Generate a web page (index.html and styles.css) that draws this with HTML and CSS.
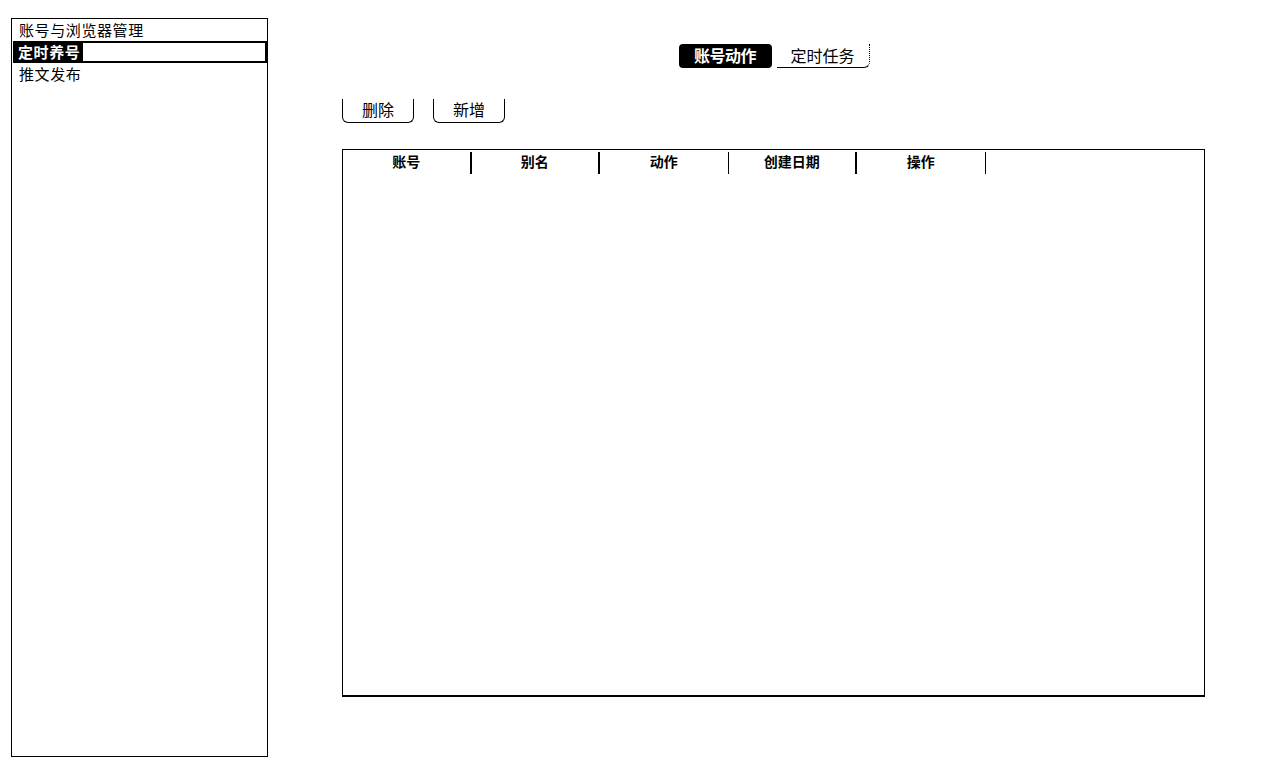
FILE: index.html
```html
<!DOCTYPE html>
<html lang="zh">
<head>
<meta charset="utf-8">
<link rel="stylesheet" href="styles.css">
<title>定时养号</title>
</head>
<body>
<div class="app">
  <nav class="sidebar">
    <div class="nav-item">账号与浏览器管理</div>
    <div class="nav-item active"><span class="nav-label">定时养号</span></div>
    <div class="nav-item">推文发布</div>
  </nav>
  <main class="main">
    <div class="tabs">
      <div class="tab selected">账号动作</div>
      <div class="tab">定时任务</div>
    </div>
    <div class="toolbar">
      <button class="btn">删除</button>
      <button class="btn">新增</button>
    </div>
    <div class="table">
      <div class="thead">
        <div class="th">账号</div>
        <div class="th thick">别名</div>
        <div class="th">动作</div>
        <div class="th thick">创建日期</div>
        <div class="th">操作</div>
      </div>
    </div>
  </main>
</div>
</body>
</html>
```

FILE: styles.css
```css
* { box-sizing: border-box; }
html, body {
  margin: 0;
  padding: 0;
  background: #fff;
  color: #000;
  font-family: "Noto Sans CJK SC", "Noto Sans", sans-serif;
}
.app {
  display: flex;
  height: 767px;
  padding: 18px 0 10px 11px;
}
.sidebar {
  width: 257px;
  flex: none;
  border: 1px solid #000;
  display: flex;
  flex-direction: column;
}
.nav-item {
  font-size: 15px;
  letter-spacing: 0.6px;
  line-height: 21px;
  height: 22px;
  padding-left: 7px;
  white-space: nowrap;
}
.nav-item.active {
  margin: 0 0 0 1px;
  border: 2px solid #000;
  border-left: none;
  padding-left: 5px;
  font-weight: bold;
  line-height: 18px;
  background: linear-gradient(#000, #000) left / 70px 100% no-repeat;
}
.nav-label {
  color: #fff;
  background: #000;
}
.main {
  flex: 1;
  display: flex;
  flex-direction: column;
  padding: 26px 75px 0 74px;
}
.tabs {
  display: flex;
  justify-content: center;
  gap: 5px;
  padding-left: 1px;
}
.tab {
  width: 93px;
  height: 24px;
  font-size: 16px;
  line-height: 22px;
  text-align: center;
  border-bottom: 1px solid #000;
  border-bottom-right-radius: 6px;
  border-right: 1px dotted #000;
}
.tab.selected {
  background: #000;
  color: #fff;
  border: none;
  border-radius: 4px;
  font-weight: bold;
  letter-spacing: -0.5px;
}
.toolbar {
  display: flex;
  gap: 19px;
  margin-top: 31px;
}
.btn {
  width: 72px;
  height: 24px;
  padding: 0 0 4px;
  font-family: inherit;
  font-size: 16px;
  line-height: 18px;
  background: #fff;
  color: #000;
  border: 1px solid #000;
  border-top: none;
  border-radius: 0 0 6px 6px;
}
.table {
  margin-top: 26px;
  width: 863px;
  height: 548px;
  border: 1px solid #000;
  border-bottom-width: 2px;
  padding-top: 2px;
}
.thead {
  display: flex;
}
.th {
  width: 128.5px;
  height: 22px;
  font-size: 14px;
  font-weight: bold;
  line-height: 19px;
  text-align: center;
  border-right: 1px solid #000;
}
.th.thick, .th:first-child {
  border-right-width: 2px;
}
```
